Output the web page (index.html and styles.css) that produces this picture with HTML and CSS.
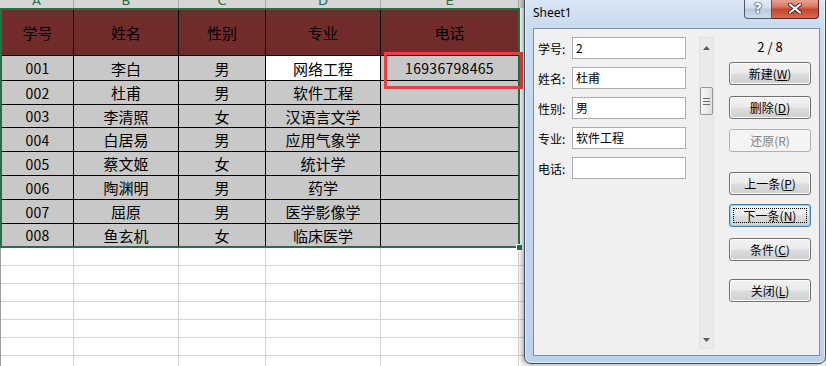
FILE: index.html
```html
<!DOCTYPE html>
<html lang="zh-CN">
<head>
<meta charset="utf-8">
<title>Sheet1</title>
<link rel="stylesheet" href="styles.css">
</head>
<body>
<div class="sheet">
  <div class="colhead">
    <div class="ch"><span>A</span></div>
    <div class="ch"><span>B</span></div>
    <div class="ch"><span>C</span></div>
    <div class="ch"><span>D</span></div>
    <div class="ch"><span>E</span></div>
    <div class="ch"><span>F</span></div>
  </div>
  <div class="sel">
    <div class="grid">
      <div class="c h">学号</div><div class="c h">姓名</div><div class="c h">性别</div><div class="c h">专业</div><div class="c h last">电话</div>
      <div class="c"><span class="num">001</span></div><div class="c">李白</div><div class="c">男</div><div class="c white">网络工程</div><div class="c last"><span class="num">16936798465</span></div>
      <div class="c"><span class="num">002</span></div><div class="c">杜甫</div><div class="c">男</div><div class="c">软件工程</div><div class="c last"></div>
      <div class="c"><span class="num">003</span></div><div class="c">李清照</div><div class="c">女</div><div class="c">汉语言文学</div><div class="c last"></div>
      <div class="c"><span class="num">004</span></div><div class="c">白居易</div><div class="c">男</div><div class="c">应用气象学</div><div class="c last"></div>
      <div class="c"><span class="num">005</span></div><div class="c">蔡文姬</div><div class="c">女</div><div class="c">统计学</div><div class="c last"></div>
      <div class="c"><span class="num">006</span></div><div class="c">陶渊明</div><div class="c">男</div><div class="c">药学</div><div class="c last"></div>
      <div class="c"><span class="num">007</span></div><div class="c">屈原</div><div class="c">男</div><div class="c">医学影像学</div><div class="c last"></div>
      <div class="c bot"><span class="num">008</span></div><div class="c bot">鱼玄机</div><div class="c bot">女</div><div class="c bot">临床医学</div><div class="c bot last"></div>
    </div>
    <div class="handle"></div>
  </div>
  <div class="empty">
    <div></div><div></div><div></div><div></div><div></div><div></div>
    <div></div><div></div><div></div><div></div><div></div><div></div>
    <div></div><div></div><div></div><div></div><div></div><div></div>
    <div></div><div></div><div></div><div></div><div></div><div></div>
    <div></div><div></div><div></div><div></div><div></div><div></div>
    <div></div><div></div><div></div><div></div><div></div><div></div>
    <div></div><div></div><div></div><div></div><div></div><div></div>
  </div>
  <div class="redbox"></div>
</div>

<div class="dlg">
  <div class="titlebar">
    <span class="title">Sheet1</span>
    <div class="tbtns">
      <div class="help">?</div>
      <div class="close">
        <svg width="14" height="11" viewBox="0 0 14 11"><path d="M2 1.5 L12 9.5 M12 1.5 L2 9.5" stroke="#4a2222" stroke-width="4" stroke-linecap="round"/><path d="M2 1.5 L12 9.5 M12 1.5 L2 9.5" stroke="#ffffff" stroke-width="2.2" stroke-linecap="round"/></svg>
      </div>
    </div>
  </div>
  <div class="panel">
    <div class="fields">
      <div class="row"><label>学号:</label><div class="inp">2</div></div>
      <div class="row"><label>姓名:</label><div class="inp">杜甫</div></div>
      <div class="row"><label>性别:</label><div class="inp">男</div></div>
      <div class="row"><label>专业:</label><div class="inp">软件工程</div></div>
      <div class="row"><label>电话:</label><div class="inp"></div></div>
    </div>
    <div class="scroll">
      <div class="arrow up"><svg width="7" height="4" viewBox="0 0 7 4"><polygon points="0,4 7,4 3.5,0" fill="#5c5c5c"/></svg></div>
      <div class="thumb"><svg width="7" height="7" viewBox="0 0 7 7"><path d="M0 0.5 H7 M0 3.5 H7 M0 6.5 H7" stroke="#6a6a6a" stroke-width="1"/></svg></div>
      <div class="arrow down"><svg width="7" height="4" viewBox="0 0 7 4"><polygon points="0,0 7,0 3.5,4" fill="#5c5c5c"/></svg></div>
    </div>
    <div class="btns">
      <div class="count">2 / 8</div>
      <div class="btn">新建(<u>W</u>)</div>
      <div class="btn mt11">删除(<u>D</u>)</div>
      <div class="btn mt10 disabled">还原(R)</div>
      <div class="btn mt20">上一条(<u>P</u>)</div>
      <div class="btn mt9 focus">下一条(<u>N</u>)</div>
      <div class="btn mt11">条件(<u>C</u>)</div>
      <div class="btn mt18">关闭(<u>L</u>)</div>
    </div>
  </div>
</div>
</body>
</html>
```

FILE: styles.css
```css
html, body {
  margin: 0;
  padding: 0;
}
body {
  width: 826px;
  height: 366px;
  overflow: hidden;
  background: #ffffff;
  position: relative;
  font-family: "Noto Sans CJK SC", sans-serif;
}

/* ---------- spreadsheet ---------- */
.sheet {
  width: 826px;
}
.colhead {
  display: grid;
  grid-template-columns: 74px 105px 87px 115px 138px 1fr;
  height: 8px;
  background: #d6d6d6;
  overflow: hidden;
}
.ch {
  border-right: 1px solid #ababab;
  text-align: center;
  color: #217346;
  font-family: "DejaVu Sans", sans-serif;
  font-size: 13px;
  overflow: hidden;
}
.ch span {
  display: block;
  line-height: 13px;
  margin-top: -6px;
}
.sel {
  position: relative;
  width: 520px;
  height: 240px;
  box-sizing: border-box;
  border: 2px solid #217346;
}
.grid {
  display: grid;
  grid-template-columns: 72px 105px 87px 115px 137px;
  grid-template-rows: 46px 25px 24px 23px 24px 24px 24px 24px 22px;
}
.c {
  box-sizing: border-box;
  border-right: 1px solid #000;
  border-bottom: 1px solid #000;
  background: #c8c8c8;
  display: flex;
  align-items: center;
  justify-content: center;
  font-size: 15px;
  color: #000;
  white-space: nowrap;
}
.c.h {
  background: #722b2b;
}
.c.white {
  background: #ffffff;
}
.c.last {
  border-right: none;
}
.c.bot {
  border-bottom: none;
}
.num {
  font-family: "Noto Sans CJK SC", sans-serif;
  font-variant-numeric: tabular-nums;
  font-size: 14px;
  letter-spacing: 0.3px;
}
.handle {
  position: absolute;
  right: -5px;
  bottom: -5px;
  width: 5px;
  height: 5px;
  background: #217346;
  border: 1px solid #ffffff;
}
.empty {
  display: grid;
  grid-template-columns: 73px 105px 87px 115px 138px 1fr;
  grid-auto-rows: 18px;
  border-left: 1px solid #9e9e9e;
}
.empty div {
  box-sizing: border-box;
  border-right: 1px solid #d4d4d4;
  border-bottom: 1px solid #d4d4d4;
}
.redbox {
  position: absolute;
  left: 384px;
  top: 52px;
  width: 139px;
  height: 37px;
  box-sizing: border-box;
  border: 3px solid #e8413f;
}

/* ---------- dialog ---------- */
.dlg {
  position: absolute;
  left: 524px;
  top: -6px;
  width: 302px;
  height: 370px;
  box-sizing: border-box;
  border: 1px solid #3e4a5a;
  border-radius: 7px;
  background: linear-gradient(to bottom, #dce8f5 0%, #cadcf0 8%, #c2d7ee 40%, #bcd3ec 100%);
  box-shadow: inset 0 0 0 1px rgba(255,255,255,0.55), -2px 1px 5px rgba(0,0,0,0.35);
  display: flex;
  flex-direction: column;
}
.titlebar {
  height: 33px;
  display: flex;
  align-items: flex-start;
  padding-left: 8px;
}
.title {
  font-family: "Noto Sans", sans-serif;
  font-size: 12px;
  line-height: 16px;
  margin-top: 10px;
  color: #000;
}
.tbtns {
  margin-left: auto;
  margin-right: 6px;
  margin-top: 4px;
  display: flex;
}
.help {
  width: 28px;
  height: 20px;
  box-sizing: border-box;
  border: 1px solid #4a5a70;
  border-top: none;
  border-radius: 0 0 0 4px;
  background: linear-gradient(to bottom, #e7eef6 0%, #d3deeb 45%, #bccbdd 55%, #cfdcea 100%);
  color: #ffffff;
  font-family: "DejaVu Sans", sans-serif;
  font-weight: bold;
  font-size: 14px;
  line-height: 19px;
  text-align: center;
  text-shadow: 0 0 1px #27364a, 0 0 1px #27364a, 0 0 2px #27364a;
}
.close {
  width: 47px;
  height: 20px;
  box-sizing: border-box;
  border: 1px solid #4a2a2a;
  border-left: none;
  border-top: none;
  border-radius: 0 0 4px 0;
  background: linear-gradient(to bottom, #e9a899 0%, #d97a66 40%, #c5452c 55%, #d46a4f 100%);
  display: flex;
  align-items: center;
  justify-content: center;
}
.close svg {
  display: block;
}
.panel {
  margin: 0 5px 0 8px;
  height: 328px;
  box-sizing: border-box;
  border: 1px solid #7d8ea3;
  background: #f0f0f0;
  display: flex;
  padding: 8px 0 0 4px;
  font-size: 12px;
  color: #000;
}
.fields {
  width: 148px;
  display: flex;
  flex-direction: column;
  gap: 8px;
}
.row {
  display: flex;
  align-items: center;
  height: 22px;
}
.row label {
  width: 34px;
  font-size: 12px;
}
.inp {
  width: 114px;
  height: 22px;
  box-sizing: border-box;
  border: 1px solid #abadb3;
  background: #ffffff;
  padding-left: 3px;
  line-height: 20px;
  font-size: 12px;
}
.scroll {
  width: 15px;
  height: 312px;
  margin-left: 13px;
  box-sizing: border-box;
  background: #eaeaea;
  border: 1px solid #e2e2e2;
  display: flex;
  flex-direction: column;
  align-items: center;
}
.arrow {
  height: 19px;
  display: flex;
  align-items: center;
  justify-content: center;
}
.arrow.down {
  margin-top: auto;
  height: 17px;
}
.arrow svg {
  display: block;
}
.thumb {
  margin-top: 30px;
  width: 13px;
  height: 28px;
  box-sizing: border-box;
  border: 1px solid #979797;
  border-radius: 2px;
  background: linear-gradient(to right, #f6f6f6 0%, #ececec 50%, #dedede 100%);
  display: flex;
  align-items: center;
  justify-content: center;
}
.thumb svg {
  display: block;
}
.btns {
  width: 82px;
  margin-left: 15px;
  display: flex;
  flex-direction: column;
}
.count {
  height: 19px;
  line-height: 19px;
  text-align: center;
  font-size: 13px;
  margin-bottom: 6px;
}
.btn {
  position: relative;
  height: 23px;
  box-sizing: border-box;
  border: 1px solid #707070;
  border-radius: 3px;
  background: linear-gradient(to bottom, #f2f2f2 0%, #ebebeb 48%, #dddddd 52%, #cfcfcf 100%);
  box-shadow: inset 0 0 0 1px #fbfbfb;
  display: flex;
  align-items: center;
  justify-content: center;
  font-size: 12px;
  color: #000;
}
.btn u {
  text-underline-offset: 1px;
}
.mt9 { margin-top: 9px; }
.mt10 { margin-top: 10px; }
.mt11 { margin-top: 11px; }
.mt18 { margin-top: 18px; }
.mt20 { margin-top: 20px; }
.btn.disabled {
  color: #838383;
  border-color: #adb2b5;
  background: #f4f4f4;
  box-shadow: none;
}
.btn.focus {
  border-color: #3c7fb1;
  box-shadow: inset 0 0 0 1px #8fd1f2;
}
.btn.focus::after {
  content: "";
  position: absolute;
  left: 3px;
  top: 3px;
  right: 3px;
  bottom: 3px;
  border: 1px dotted #000;
}
```
